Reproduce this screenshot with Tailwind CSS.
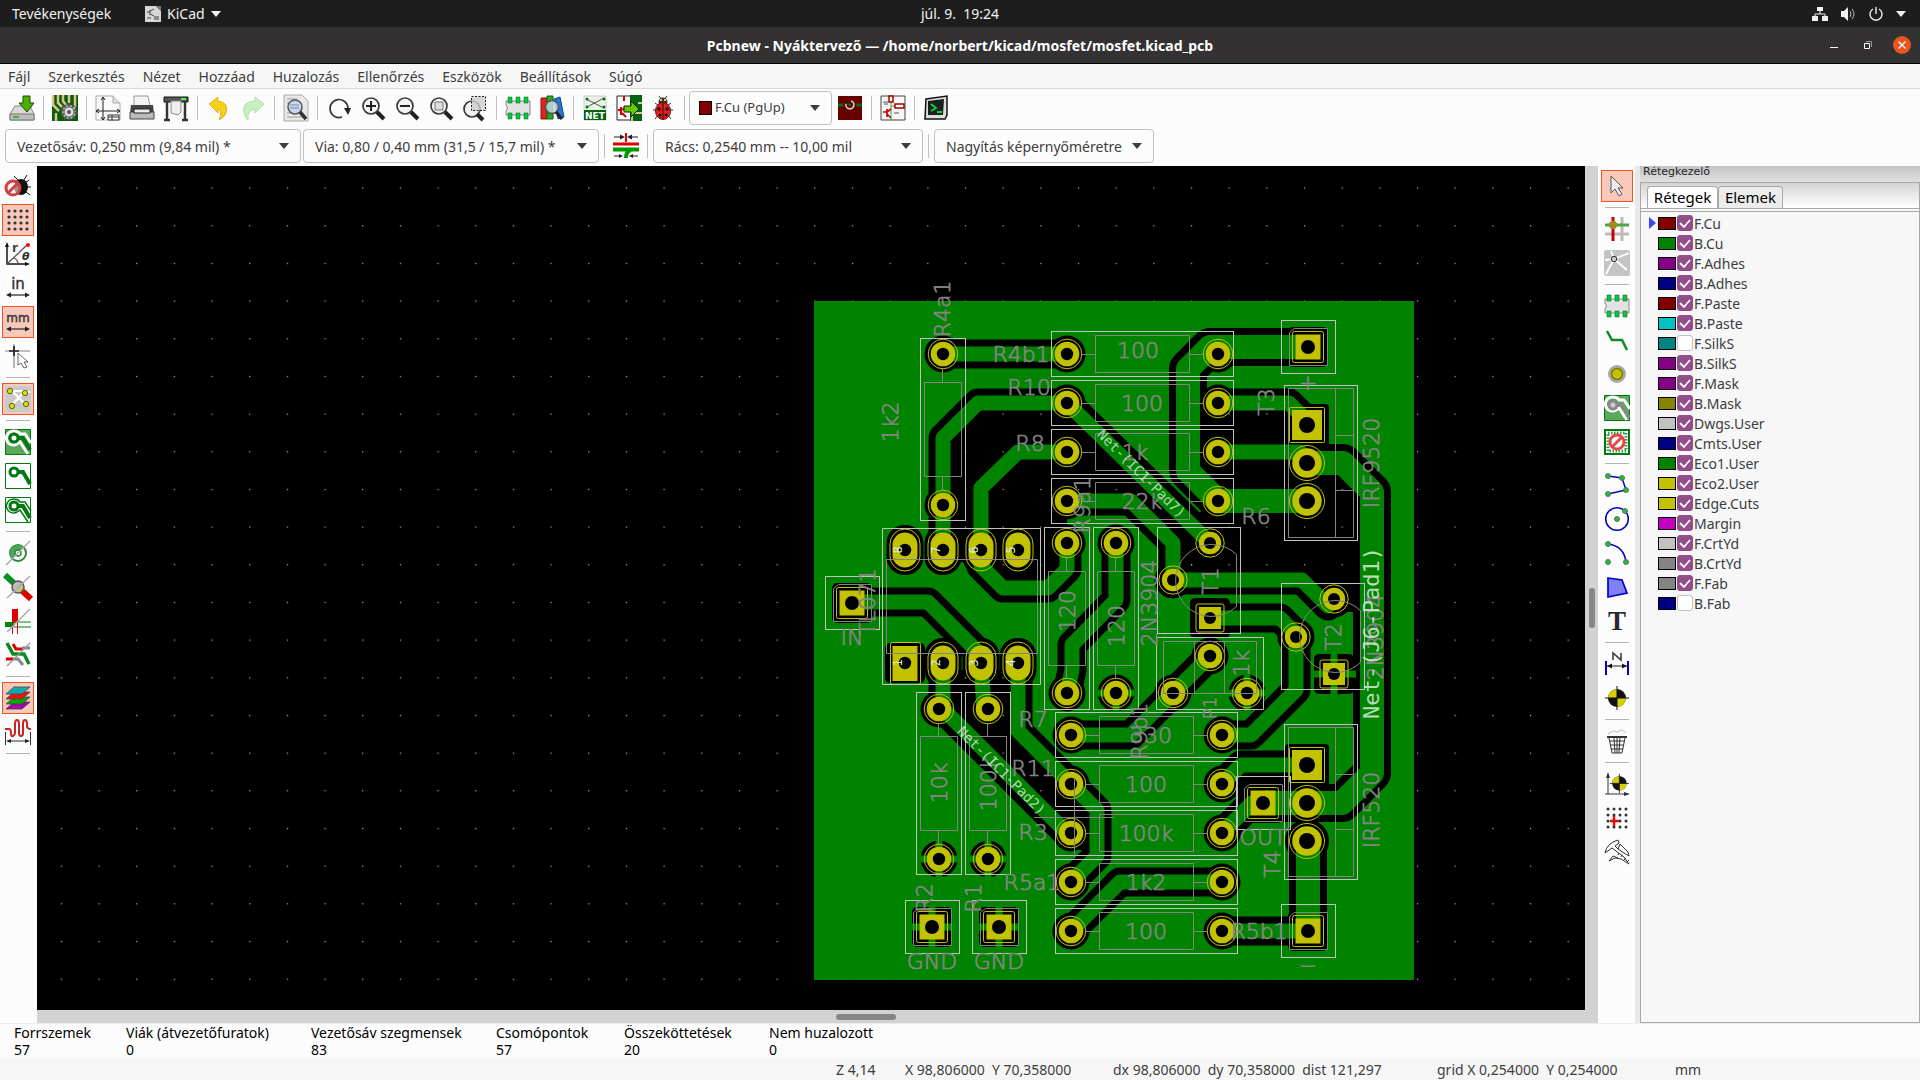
<!DOCTYPE html>
<html lang="hu">
<head>
  <meta charset="UTF-8" />
  <meta name="viewport" content="width=device-width, initial-scale=1" />
  <title>Pcbnew - Nyáktervező</title>
  <script src="https://cdn.jsdelivr.net/npm/@tailwindcss/browser@4"></script>
</head>
<body class="h-screen flex flex-col overflow-hidden bg-[#fcfcfc] text-[#3d3d3d] text-[14px] font-['Noto_Sans',sans-serif]">

  <!-- Top bar -->
  <header class="h-[27px] shrink-0 grid grid-cols-3 items-center bg-[#1d1d1d] text-[#f2f2f2] px-3">
    <div class="flex items-center">
      <button class="w-[133px] text-left">Tevékenységek</button>
      <button class="flex items-center gap-[6px]">
        <svg class="size-4" viewBox="0 0 16 16"><path d="M0 0h11l5 5v11H0z" fill="#d6d6d6"/><path d="M11 0h5v5z" fill="#777"/><path d="M2 6h3M5 4v5M5 5l4-2M5 8l4 2M2 12h4M9 11h5M9 13h5" stroke="#444" fill="none"/></svg>
        KiCad
        <svg class="w-[10px] h-[6px]" viewBox="0 0 10 6"><path d="M0 0h10L5 6z" fill="#f2f2f2"/></svg>
      </button>
    </div>
    <div class="text-center">júl. 9.&nbsp; 19:24</div>
    <div class="flex items-center justify-end gap-3 pr-[2px]">
      <svg class="size-4" viewBox="0 0 16 16" fill="#f2f2f2"><path d="M5 1h6v4H5zM0 10h6v5H0zM10 10h6v5h-6z"/><path d="M8 5v3M3 10V8h10v2" stroke="#f2f2f2" fill="none"/></svg>
      <svg class="size-4" viewBox="0 0 16 16"><path d="M1 5h3l4-4v14l-4-4H1z" fill="#f2f2f2"/><path d="M10 5q2 3 0 6M12 3q4 5 0 10" stroke="#bbb" fill="none"/></svg>
      <svg class="size-4" viewBox="0 0 16 16"><path d="M5 3a6 6 0 1 0 6 0M8 1v7" stroke="#f2f2f2" stroke-width="1.4" fill="none"/></svg>
      <svg class="w-[10px] h-[6px]" viewBox="0 0 10 6"><path d="M0 0h10L5 6z" fill="#f2f2f2"/></svg>
    </div>
  </header>

  <!-- Window title -->
  <div class="h-[37px] shrink-0 grid grid-cols-[1fr_auto_1fr] items-center bg-[#333132] border-b border-black text-white">
    <span></span>
    <h1 class="font-bold text-[14px]">Pcbnew - Nyáktervező — /home/norbert/kicad/mosfet/mosfet.kicad_pcb</h1>
    <div class="flex items-center justify-end gap-[26px] pr-[9px]">
      <button aria-label="Minimize"><svg class="w-2 h-2" viewBox="0 0 8 8"><path d="M0 6.500h8" stroke="#fff"/></svg></button>
      <button aria-label="Restore" class="-mr-[5px]"><svg class="w-2 h-2" viewBox="0 0 8 8" fill="none"><path d="M.5 2.500h5v5h-5z" stroke="#fff"/><path d="M2 .5h5.500V6" stroke="#999"/></svg></button>
      <button aria-label="Close" class="size-[18px] rounded-full bg-[#e95420] flex items-center justify-center"><svg class="size-2" viewBox="0 0 8 8"><path d="M.5.5l7 7M7.500.5l-7 7" stroke="#fff" stroke-width="1.300"/></svg></button>
    </div>
  </div>

  <!-- Menu -->
  <nav class="h-[25px] shrink-0 flex items-center gap-[18px] px-2 bg-[#f6f6f6] border-b border-[#d9d9d9] text-[14px]">
    <button>Fájl</button><button>Szerkesztés</button><button>Nézet</button><button>Hozzáad</button><button>Huzalozás</button><button>Ellenőrzés</button><button>Eszközök</button><button>Beállítások</button><button>Súgó</button>
  </nav>

  <!-- Main toolbar -->
  <div class="h-[38px] shrink-0 flex items-center pl-[5px] pb-px">
    <div class="flex items-center" data-icons="save | board | page print plot | undo redo | find | refresh zin zout zfit zsel | fp lib | net update bug |"></div>
    <div class="relative w-[143px] mr-px">
      <span class="absolute left-[10px] top-[10px] w-[13px] h-[14px] bg-[#840000] border border-black"></span>
      <select aria-label="Réteg" class="appearance-none w-full h-[34px] rounded border border-[#c0c0c0] pl-[25px] bg-transparent text-[13px]"><option>F.Cu (PgUp)</option></select>
      <svg class="absolute right-3 top-[14px] w-[10px] h-[6px] pointer-events-none" viewBox="0 0 10 6"><path d="M0 0h10L5 6z" fill="#3d3d3d"/></svg>
    </div>
    <div class="flex items-center" data-icons="pair | sch | term"></div>
  </div>

  <!-- Selectors -->
  <div class="h-[39px] shrink-0 flex items-center pl-[5px] pb-px">
    <div class="relative w-[296px] mr-[2px]">
      <select aria-label="Vezetősáv" class="appearance-none w-full h-[34px] rounded border border-[#c0c0c0] pl-[11px] text-[14px]"><option>Vezetősáv: 0,250 mm (9,84 mil) *</option></select>
      <svg class="absolute right-3 top-[14px] w-[10px] h-[6px] pointer-events-none" viewBox="0 0 10 6"><path d="M0 0h10L5 6z" fill="#3d3d3d"/></svg>
    </div>
    <div class="relative w-[296px]">
      <select aria-label="Via" class="appearance-none w-full h-[34px] rounded border border-[#c0c0c0] pl-[11px] text-[14px]"><option>Via: 0,80 / 0,40 mm (31,5 / 15,7 mil) *</option></select>
      <svg class="absolute right-3 top-[14px] w-[10px] h-[6px] pointer-events-none" viewBox="0 0 10 6"><path d="M0 0h10L5 6z" fill="#3d3d3d"/></svg>
    </div>
    <div class="flex items-center px-px" data-icons="| width |"></div>
    <div class="relative w-[270px]">
      <select aria-label="Rács" class="appearance-none w-full h-[34px] rounded border border-[#c0c0c0] pl-[11px] text-[14px]"><option>Rács: 0,2540 mm -- 10,00 mil</option></select>
      <svg class="absolute right-3 top-[14px] w-[10px] h-[6px] pointer-events-none" viewBox="0 0 10 6"><path d="M0 0h10L5 6z" fill="#3d3d3d"/></svg>
    </div>
    <div class="flex items-center px-px" data-icons="|"></div>
    <div class="relative w-[220px]">
      <select aria-label="Nagyítás" class="appearance-none w-full h-[34px] rounded border border-[#c0c0c0] pl-[11px] text-[14px]"><option>Nagyítás képernyőméretre</option></select>
      <svg class="absolute right-3 top-[14px] w-[10px] h-[6px] pointer-events-none" viewBox="0 0 10 6"><path d="M0 0h10L5 6z" fill="#3d3d3d"/></svg>
    </div>
  </div>

  <main class="flex-1 min-h-0 flex">
    <!-- Left toolbar -->
    <div class="w-[37px] shrink-0 flex flex-col items-center pt-[3px] pr-px" data-col="drc grid* polar inch mm* cursor | rats* | zfill znone zoutl | padsk viask trksk hc | layers* wave |"></div>

    <div class="flex-1 min-w-0 flex flex-col bg-[#d2d2d2]">
      <div class="flex-1 min-h-0 flex">
        <svg id="board" class="flex-1 min-w-0 h-full bg-black" viewBox="37 166 1548 844">
          <defs>
            <pattern id="dots" x="60.800" y="187.500" width="37.670" height="37.670" patternUnits="userSpaceOnUse"><rect width="1.200" height="1.200" fill="#b4b4b4"/></pattern>
            <!-- clearances -->
            <circle id="k" r="18.500"/>
            <rect id="ks" x="-20" y="-20" width="40" height="40" rx="5"/>
            <rect id="ko" x="-18.500" y="-25" width="37" height="50" rx="18"/>
            <!-- pads -->
            <g id="p"><circle r="12.300" fill="#c2c200"/><circle r="6.200"/><circle r="14.800" fill="none" stroke="#c2c200"/></g>
            <g id="pt"><circle r="11.200" fill="#c2c200"/><circle r="6"/><circle r="14.200" fill="none" stroke="#c2c200"/></g>
            <g id="pb"><circle r="14.800" fill="#c2c200"/><circle r="8"/><circle r="17.500" fill="none" stroke="#c2c200"/></g>
            <g id="s"><rect x="-12.500" y="-12.500" width="25" height="25" fill="#c2c200"/><circle r="7"/><rect x="-15.500" y="-15.500" width="31" height="31" rx="2" fill="none" stroke="#c2c200"/></g>
            <g id="st"><rect x="-11" y="-11" width="22" height="22" fill="#c2c200"/><circle r="6"/><rect x="-14" y="-14" width="28" height="28" rx="2" fill="none" stroke="#c2c200"/></g>
            <g id="sb"><rect x="-15" y="-15" width="30" height="30" fill="#c2c200"/><circle r="8"/><rect x="-17.500" y="-17.500" width="35" height="35" rx="1" fill="none" stroke="#c2c200"/></g>
            <g id="o"><rect x="-12.500" y="-17.500" width="25" height="35" rx="12.500" fill="#c2c200"/><circle r="6.200"/><rect x="-15" y="-21" width="30" height="42" rx="15" fill="none" stroke="#c2c200"/></g>
            <!-- footprints -->
            <g id="res"><rect x="-15.500" y="-22.500" width="182" height="45" stroke="#c2c2c2"/><path d="M28.500-18.500h94v37h-94zM15 .5h13M123 .5h13" stroke="#848484"/></g>
            <g id="pin"><rect x="-26.500" y="-26.500" width="54" height="53" stroke="#c2c2c2"/><path d="M-18.500-14.500l5-4h33v37h-38z" stroke="#848484"/></g>
            <g id="to220"><rect x="1284.500" y="385.500" width="73" height="155" stroke="#c2c2c2"/><path d="M1288.500 388.500h65v149h-65zM1335.500 388v149M1336 435.500h18M1336 490.500h18" stroke="#848484"/></g>
            <g id="to92"><rect x="1157.500" y="527.500" width="83" height="106" stroke="#c2c2c2"/><path d="M1236.500 554.500v52A36 36 0 1 1 1236.500 554.500" stroke="#848484"/></g>
            <!-- unfilled areas -->
            <g id="voids">
              <path d="M978 410H1067L1210 543 1195 580H1173V543L1131 501H1067V543L1048 580H1003L985 565 943 560V438z"/>
              <path d="M1200 400H1290L1325 463 1360 497V612H1334L1300 580H1173L1210 543 1195 515 1218 501 1200 480z"/>
              <path d="M943 670H1018V731L1097 810V850H1067L939 709z"/>
              <path d="M1237 776H1290V803H1237z"/>
            </g>
          </defs>

          <rect x="37" y="166" width="1548" height="844" fill="url(#dots)"/>
          <rect x="814" y="301" width="600" height="679" fill="#008400"/>
          <use href="#voids" fill="#000"/>

          <!-- track and pad clearances -->
          <g fill="none" stroke="#000" stroke-width="29" stroke-linejoin="round" stroke-linecap="round">
            <path d="M943 354H1067M1067 403H978L943 438V550M1067 452H1018L981 488V566L1003 588H1048L1067 569V543M1067 403L1210 543M1218 403H1289L1307 421M1218 452H1300M1067 501H1131L1173 543V580H1302L1328 606M1210 618H1280L1296 634V690L1251 735H1222M1116 543V600L1072 645V670L1067 693M1210 656L1131 735H1071M852 602H928L981 655V663L984 709M943 663V709L1067 833M1018 663V731L1097 810V856L1071 882M1222 882H1120L1071 931M1222 931H1308M1222 833L1252 803M1222 784L1241 765H1307"/>
            <path stroke-width="38" d="M1308 347H1210L1188 369V471L1218 501H1307M1307 463H1343L1372 492V773L1342 803H1263M1308 841V931"/>
          </g>
          <g fill="#000">
            <use href="#k" x="943" y="354"/><use href="#k" x="943" y="505"/><use href="#k" x="1067" y="354"/><use href="#k" x="1218" y="354"/><use href="#k" x="1067" y="403"/><use href="#k" x="1218" y="403"/><use href="#k" x="1067" y="452"/><use href="#k" x="1218" y="452"/><use href="#k" x="1067" y="501"/><use href="#k" x="1218" y="501"/>
            <use href="#k" x="1067" y="543"/><use href="#k" x="1067" y="693"/><use href="#k" x="1116" y="543"/><use href="#k" x="1116" y="693"/><use href="#k" x="1210" y="656"/><use href="#k" x="1173" y="693"/><use href="#k" x="1247" y="693"/><use href="#k" x="1173" y="580"/><use href="#k" x="1334" y="599"/><use href="#k" x="1296" y="637"/>
            <use href="#k" x="939" y="709"/><use href="#k" x="939" y="859"/><use href="#k" x="988" y="859"/><use href="#k" x="1071" y="735"/><use href="#k" x="1222" y="735"/><use href="#k" x="1071" y="784"/><use href="#k" x="1222" y="784"/><use href="#k" x="1071" y="833"/><use href="#k" x="1222" y="833"/><use href="#k" x="1071" y="882"/><use href="#k" x="1222" y="882"/><use href="#k" x="1071" y="931"/><use href="#k" x="1222" y="931"/>
            <use href="#ko" x="905" y="550"/><use href="#ko" x="943" y="550"/><use href="#ko" x="981" y="550"/><use href="#ko" x="1018" y="550"/><use href="#ks" x="905" y="663"/><use href="#ko" x="943" y="663"/><use href="#ko" x="981" y="663"/><use href="#ko" x="1018" y="663"/>
            <use href="#ks" x="852" y="603"/><use href="#ks" x="1308" y="347"/><use href="#ks" x="1308" y="931"/><use href="#ks" x="932" y="927"/><use href="#ks" x="999" y="927"/><use href="#ks" x="1263" y="803"/><use href="#ks" x="1210" y="618"/><use href="#ks" x="1334" y="674"/>
            <rect x="1285" y="404" width="44" height="44" rx="4"/><rect x="1285" y="744" width="44" height="44" rx="4"/><circle cx="1307" cy="841" r="22"/><circle cx="1307" cy="803" r="22"/>
          </g>
          <use href="#voids" fill="url(#dots)"/>

          <!-- back copper -->
          <g fill="none" stroke="#008400" stroke-width="15" stroke-linejoin="round" stroke-linecap="round">
            <path d="M943 354H1067M1067 403H978L943 438V550M1067 452H1018L981 488V566L1003 588H1048L1067 569V543M1067 403L1210 543M1218 403H1289L1307 421M1218 452H1300M1067 501H1131L1173 543V580H1302L1328 606M1210 618H1280L1296 634V690L1251 735H1222M1116 543V600L1072 645V670L1067 693M1210 656L1131 735H1071M852 602H928L981 655V663L984 709M943 663V709L1067 833M1018 663V731L1097 810V856L1071 882M1222 882H1120L1071 931M1222 931H1308M1222 833L1252 803M1222 784L1241 765H1307"/>
            <path stroke-width="24" d="M1308 347H1210L1188 369V471L1218 501H1307M1307 463H1343L1372 492V773L1342 803H1263M1308 841V931"/>
            <path stroke-width="7" stroke-linecap="butt" d="M932 905V949M910 927H954M999 905V949M977 927H1021M939 838V880M919 859H960M988 838V880M967 859H1009M1116 693V714M1096 693H1137M1247 672V714M1226 693H1268M1334 652V696M1312 674H1356"/>
          </g>

          <use href="#p" x="943" y="354"/><use href="#p" x="943" y="505"/><use href="#p" x="1067" y="354"/><use href="#p" x="1218" y="354"/><use href="#p" x="1067" y="403"/><use href="#p" x="1218" y="403"/><use href="#p" x="1067" y="452"/><use href="#p" x="1218" y="452"/><use href="#p" x="1067" y="501"/><use href="#p" x="1218" y="501"/>
          <use href="#p" x="1067" y="543"/><use href="#p" x="1067" y="693"/><use href="#p" x="1116" y="543"/><use href="#p" x="1116" y="693"/><use href="#p" x="1210" y="656"/><use href="#p" x="1173" y="693"/><use href="#p" x="1247" y="693"/><use href="#pt" x="1210" y="543"/><use href="#pt" x="1173" y="580"/><use href="#pt" x="1334" y="599"/><use href="#pt" x="1296" y="637"/>
          <use href="#p" x="939" y="709"/><use href="#p" x="939" y="859"/><use href="#p" x="988" y="709"/><use href="#p" x="988" y="859"/><use href="#p" x="1071" y="735"/><use href="#p" x="1222" y="735"/><use href="#p" x="1071" y="784"/><use href="#p" x="1222" y="784"/><use href="#p" x="1071" y="833"/><use href="#p" x="1222" y="833"/><use href="#p" x="1071" y="882"/><use href="#p" x="1222" y="882"/><use href="#p" x="1071" y="931"/><use href="#p" x="1222" y="931"/>
          <use href="#o" x="905" y="550"/><use href="#o" x="943" y="550"/><use href="#o" x="981" y="550"/><use href="#o" x="1018" y="550"/><use href="#o" x="943" y="663"/><use href="#o" x="981" y="663"/><use href="#o" x="1018" y="663"/>
          <rect x="892.500" y="646" width="25" height="35" fill="#c2c200"/><circle cx="905" cy="663" r="6.200"/><rect x="890.500" y="642.500" width="30" height="42" rx="2" fill="none" stroke="#c2c200"/>
          <use href="#s" x="852" y="603"/><use href="#s" x="1308" y="347"/><use href="#s" x="1308" y="931"/><use href="#s" x="932" y="927"/><use href="#s" x="999" y="927"/><use href="#s" x="1263" y="803"/>
          <use href="#st" x="1210" y="618"/><use href="#st" x="1334" y="674"/>
          <use href="#sb" x="1307" y="425"/><use href="#pb" x="1307" y="463"/><use href="#pb" x="1307" y="501"/><use href="#sb" x="1307" y="765"/><use href="#pb" x="1307" y="803"/><use href="#pb" x="1307" y="841"/>

          <!-- courtyards and outlines -->
          <g fill="none">
            <use href="#res" x="1067" y="354"/><use href="#res" x="1067" y="403"/><use href="#res" x="1067" y="452"/><use href="#res" x="1067" y="501"/>
            <use href="#res" x="1071" y="735"/><use href="#res" x="1071" y="784"/><use href="#res" x="1071" y="833"/><use href="#res" x="1071" y="882"/><use href="#res" x="1071" y="931"/>
            <use href="#res" transform="translate(943 354) rotate(90)"/><use href="#res" transform="translate(1067 543) rotate(90)"/><use href="#res" transform="translate(1116 543) rotate(90)"/><use href="#res" transform="translate(939 708) rotate(90)"/><use href="#res" transform="translate(988 708) rotate(90)"/>
            <use href="#pin" x="852" y="603"/><use href="#pin" x="1308" y="347"/><use href="#pin" x="1308" y="931"/><use href="#pin" x="932" y="927"/><use href="#pin" x="999" y="927"/><use href="#pin" x="1263" y="803"/>
            <use href="#to220"/><use href="#to220" y="339"/><use href="#to92"/><use href="#to92" x="124" y="56"/>
            <path d="M882.500 528.500h158v156h-158zM1156.500 637.500h107v72h-107z" stroke="#c2c2c2"/>
            <path d="M886.500 559.500h151v94h-151zM1163.500 641.500h93v52h-93zM1194.500 641v52M1224.500 641v52M1034 817.500h80M1074.500 778v80" stroke="#848484"/>
          </g>

          <!-- values and references -->
          <g fill="#848484" stroke="#848484" stroke-width=".7" font-family="DejaVu Sans" font-weight="200" font-size="22" text-anchor="middle">
            <text x="1021" y="362">R4b1</text><text x="1029" y="395">R10</text><text x="1030" y="451">R8</text><text x="1138" y="358">100</text><text x="1142" y="411">100</text><text x="1135" y="460">1k</text><text x="1142" y="509">22k</text><text x="1256" y="524">R6</text><text x="1308" y="390">+</text>
            <text x="852" y="645">IN</text><text x="1033" y="727">R7</text><text x="1033" y="776">R11</text><text x="1033" y="840">R3</text><text x="1032" y="890">R5a1</text><text x="1151" y="743">330</text><text x="1146" y="792">100</text><text x="1146" y="841">100k</text><text x="1146" y="890">1k2</text><text x="1146" y="939">100</text><text x="1259" y="939">R5b1</text><text x="1263" y="845">OUT</text><text x="932" y="969">GND</text><text x="999" y="969">GND</text><text x="1308" y="973">−</text>
            <text transform="translate(950 309) rotate(-90)">R4a1</text><text transform="translate(898 422) rotate(-90)">1k2</text><text transform="translate(1090 505) rotate(-90)">R9a1</text><text transform="translate(1274 402) rotate(-90)">T3</text><text transform="translate(1379 463) rotate(-90)">IRF9520</text><text transform="translate(1218 581) rotate(-90)">T1</text><text transform="translate(1157 603) rotate(-90)">2N3904</text><text transform="translate(1075 611) rotate(-90)">120</text><text transform="translate(1124 626) rotate(-90)">120</text>
            <text transform="translate(1341 637) rotate(-90)">T2</text><text transform="translate(1249 663) rotate(-90)">1k</text><text font-size="18" transform="translate(1216 708) rotate(-90)">P1</text><text transform="translate(1147 731) rotate(-90)">R9b1</text><text transform="translate(1280 864) rotate(-90)">T4</text><text transform="translate(1379 810) rotate(-90)">IRF520</text><text transform="translate(1383 637) rotate(-90)">2N3904</text><text transform="translate(875 602) rotate(-90)">TL071</text>
            <text transform="translate(932 898) rotate(-90)">R2</text><text transform="translate(981 898) rotate(-90)">R1</text><text transform="translate(947 783) rotate(-90)">10k</text><text transform="translate(996 784) rotate(-90)">100k</text>
          </g>

          <!-- net names -->
          <g fill="#dcecdc" font-family="DejaVu Sans Mono" text-anchor="middle">
            <g fill-opacity=".8" font-size="14"><text transform="translate(1138 477) rotate(45)">Net-(IC1-Pad7)</text><text transform="translate(998 774) rotate(45)">Net-(IC1-Pad2)</text></g>
            <text fill-opacity=".85" font-size="22" transform="translate(1379 633) rotate(-90)">Net-(J6-Pad1)</text>
            <g font-size="12"><text transform="translate(902 550) rotate(-90)">8</text><text transform="translate(940 550) rotate(-90)">7</text><text transform="translate(978 550) rotate(-90)">6</text><text transform="translate(1015 550) rotate(-90)">5</text><text transform="translate(902 663) rotate(-90)">1</text><text transform="translate(940 663) rotate(-90)">2</text><text transform="translate(978 663) rotate(-90)">3</text><text transform="translate(1015 663) rotate(-90)">4</text></g>
          </g>
        </svg>
        <div class="w-[13px] shrink-0 flex justify-center pt-[422px]"><div class="w-[6px] h-10 rounded-full bg-[#868686]"></div></div>
      </div>
      <div class="h-[13px] shrink-0 flex items-center pl-[799px]"><div class="w-[60px] h-[6px] rounded-full bg-[#868686]"></div></div>
    </div>

    <!-- Right toolbar -->
    <div class="w-[37px] shrink-0 flex flex-col items-center pt-[3px]" data-col="arrow* | hl local | fp2 route via zone keep | poly circ arc area text | dim target | trash | origin gridorg caliper"></div>

    <!-- Layers manager -->
    <aside class="w-[285px] shrink-0 flex flex-col border-l-[5px] border-[#e8e8e8] bg-[#f7f7f7]">
      <h2 class="h-4 shrink-0 pl-[3px] bg-linear-to-b from-[#c4c4c4] to-[#e0e0e0] text-[11px] leading-3 text-[#222] font-['DejaVu_Sans',sans-serif]">Rétegkezelő</h2>
      <div class="flex-1 min-h-0 border border-[#a8a8a8]">
        <div class="h-[26px] flex items-end pl-[6px] bg-linear-to-b from-[#d4d4d4] to-white border-b border-[#a8a8a8] text-[15px] text-black">
          <button class="w-[71px] h-[22px] leading-[18px] pb-[2px] rounded-t bg-white border border-b-0 border-[#a8a8a8]">Rétegek</button>
          <button class="w-[65px] h-[22px] leading-[18px] pb-[2px] rounded-t bg-[#ececec] border border-b-0 border-[#a8a8a8]">Elemek</button>
        </div>
        <div class="h-[3px] border-b border-[#a8a8a8]"></div>
        <ul id="layers" class="pl-2 pt-px"></ul>
      </div>
    </aside>
  </main>

  <!-- Board statistics -->
  <dl class="h-[35px] shrink-0 flex pl-[14px] text-[14px] leading-[17px] text-black border-t border-[#ececec]">
    <div class="w-[112px]"><dt>Forrszemek</dt><dd>57</dd></div>
    <div class="w-[185px]"><dt>Viák (átvezetőfuratok)</dt><dd>0</dd></div>
    <div class="w-[185px]"><dt>Vezetősáv szegmensek</dt><dd>83</dd></div>
    <div class="w-[128px]"><dt>Csomópontok</dt><dd>57</dd></div>
    <div class="w-[145px]"><dt>Összeköttetések</dt><dd>20</dd></div>
    <div><dt>Nem huzalozott</dt><dd>0</dd></div>
  </dl>
  <footer class="h-[22px] shrink-0 flex items-center pl-[836px] bg-[#f6f6f6] text-[14px]">
    <span class="w-[69px]">Z 4,14</span>
    <span class="w-[208px]">X 98,806000&nbsp; Y 70,358000</span>
    <span class="w-[324px]">dx 98,806000&nbsp; dy 70,358000&nbsp; dist 121,297</span>
    <span class="w-[238px]">grid X 0,254000&nbsp; Y 0,254000</span>
    <span>mm</span>
  </footer>

  <script>
    const lens = '<circle cx="11" cy="11" r="8" fill="#f4f4f4" stroke="#3a3a3a" stroke-width="1.700"/><path d="M17 17l7 7" stroke="#222" stroke-width="4"/>';
    const chip = '<path d="M1 6h24v14H1v-4q3-3 0-6z" fill="#e2e2e2" stroke="#888"/><g fill="#0c3" stroke="#264" stroke-width=".6"><path d="M3 2h4v6H3zM11 2h4v6h-4zM19 2h4v6h-4zM3 18h4v6H3zM11 18h4v6h-4zM19 18h4v6h-4z"/></g>';
    const cursor = '<path d="M7 3v17l4-4 4 7 3-2-4-6h5z" fill="#eee" stroke="#555"/>';
    const padTrack = '<circle cx="9" cy="9" r="4" fill="#fff" stroke="#007a10" stroke-width="3"/><path d="M13 9h5l7 12" fill="none" stroke="#007a10" stroke-width="4"/>';
    const halo = '<path d="M9 2a7 7 0 1 0 3 13l3-2 8 12M9 2q4 0 6 3h5l6 9" fill="none" stroke="';
    const target = '<circle cx="13" cy="13" r="9" fill="#111"/><path d="M13 13V4a9 9 0 0 0-9 9zM13 13v9a9 9 0 0 0 9-9z" fill="#d6d000"/><path d="M13 1v24M1 13h24" stroke="#111"/>';

    // 26x26 icons
    const icons = {
      save: '<path d="M6 11h15l4 8v6H1v-6z" fill="#d8d8d8" stroke="#8a8a8a"/><path d="M1 19h24v6H1z" fill="#bdbdbd" stroke="#777"/><path d="M4 22h6" stroke="#4a4" stroke-width="2"/><path d="M14 1h7v7h4l-7 9-8-9h4z" fill="#4fae00" stroke="#164d00"/>',
      board: '<path d="M0 0h26v26H0z" fill="#0a5c0a"/><path d="M1 0v10l6 6M6 0v8l4 4M11 0v6l3 4M17 0v8M23 0v12M4 26V18M22 12v3" stroke="#d8c48c" stroke-width="2.500" fill="none"/><circle cx="17" cy="17" r="7" fill="#ccc" stroke="#555" stroke-width="3" stroke-dasharray="2.500 2"/><circle cx="17" cy="17" r="5" fill="#ddd" stroke="#555"/><circle cx="17" cy="17" r="2" fill="#555"/>',
      page: '<path d="M1 1h17l7 7v17H1z" fill="#fafafa" stroke="#aaa"/><path d="M18 1v7h7" fill="#ddd" stroke="#aaa"/><path d="M8 2v23M1 16h24M6 5l2-3 2 3M6 22l2 3 2-3M4 14l-3 2 3 2M22 14l3 2-3 2" stroke="#222" fill="none"/><path d="M13 20h11v5H13zM13 22h11M17 20v5" stroke="#333" fill="#fff"/>',
      print: '<path d="M5 1h14l2 10H5z" fill="#f4f4f4" stroke="#999"/><path d="M2 10h22l1 8H1z" fill="#444"/><path d="M1 17h24v7H1z" fill="#bbb" stroke="#444"/><path d="M5 14h16v4H5z" fill="#eee" stroke="#222"/>',
      plot: '<path d="M1 2h24v5H1z" fill="#555" stroke="#111"/><path d="M18 4h5" stroke="#4f4" stroke-width="2"/><path d="M4 7v17M22 7v17M1 25h6M19 25h6" stroke="#333" stroke-width="2.500"/><path d="M8 6h10v11l-3 3-7-2z" fill="#eee" stroke="#888"/>',
      undo: '<path d="M3 9l9-7v4q11 1 8 12-2 5-7 7 4-10-1-11v4z" fill="#f5d21a" stroke="#d19b00" stroke-width=".7"/>',
      redo: '<path d="M24 9l-9-7v4Q1 7 4 18q1 4 4 7-1-10 7-11v4z" fill="#c6f0bd" stroke="#a2d898" stroke-width=".7"/>',
      find: '<path d="M1 0h18l6 6v20H1z" fill="#e8e8e8" stroke="#aaa"/><path d="M4 4h10M4 8h4M4 18h6M4 22h16" stroke="#999"/><circle cx="12" cy="12" r="7" fill="#c8d8f4" stroke="#555" stroke-width="1.500"/><path d="M7 10h9M7 13h9" stroke="#789"/><path d="M17 17l6 7" stroke="#333" stroke-width="3.500"/>',
      refresh: '<path d="M16 22a9 9 0 1 1 6-9" fill="none" stroke="#3a3a3a" stroke-width="1.700"/><path d="M18 13h7l-3 7z" fill="#222"/>',
      zin: lens + '<path d="M6 11h10M11 6v10" stroke="#222" stroke-width="2"/>',
      zout: lens + '<path d="M6 11h10" stroke="#222" stroke-width="2"/>',
      zfit: lens + '<path d="M7 7h8v8H7z" fill="#ddd" stroke="#777"/>',
      zsel: '<circle cx="10" cy="14" r="8" fill="#f4f4f4" stroke="#3a3a3a" stroke-width="1.700"/><path d="M15 19l6 6" stroke="#222" stroke-width="4"/><path d="M9.500 1.500h14v14h-14z" fill="#ccc" fill-opacity=".8" stroke="#222" stroke-dasharray="2 1.500"/>',
      fp: chip,
      lib: '<path d="M2 3h6v21H2z" fill="#d22" stroke="#911"/><path d="M8 1h6v23H8z" fill="#2a2" stroke="#161"/><path d="M15 4l6-2 4 20-6 2z" fill="#27d" stroke="#148"/><circle cx="13" cy="12" r="6.500" fill="#cde" fill-opacity=".8" stroke="#555" stroke-width="1.500"/><path d="M17 17l6 7" stroke="#222" stroke-width="3"/>',
      net: '<path d="M2 1h22v24H2z" fill="#eee" stroke="#ccc"/><path d="M4 4l18 9M22 3L5 12" stroke="#363"/><g fill="#070"><circle cx="5" cy="4" r="1.500"/><circle cx="22" cy="4" r="1.500"/><circle cx="5" cy="12" r="1.500"/><circle cx="22" cy="12" r="1.500"/></g><path d="M2 15h22v10H2z" fill="#006410"/><text x="13" y="23.500" font-size="9" font-family="DejaVu Sans" font-weight="bold" fill="#fff" text-anchor="middle">NET</text>',
      update: '<path d="M1 1h24v24H1z" fill="#fff" stroke="#222"/><path d="M14 0h12v26H14z" fill="#006410"/><path d="M8 1v5M2 15h4M5 12v8M6 15l4-3M6 18l4 4" stroke="#c00" stroke-width="2" fill="none"/><path d="M16 26V18h10M22 8h4" stroke="#d8c48c" stroke-width="2" fill="none"/><path d="M8 11h7V6l8 8-8 8v-5H8z" fill="#6c0" stroke="#122"/>',
      bug: '<path d="M5 8l4 3M21 8l-4 3M3 15h5M23 15h-5M5 24l4-5M21 24l-4-5M9 1l3 4M17 1l-3 4" stroke="#333"/><circle cx="13" cy="7" r="4.500" fill="#333"/><path d="M10 5h2M14 5h2" stroke="#e8d060" stroke-width="2"/><ellipse cx="13" cy="16" rx="7.500" ry="8.500" fill="#d22" stroke="#611"/><path d="M13 8v16" stroke="#400"/><g fill="#200"><circle cx="9" cy="14" r="1.700"/><circle cx="17" cy="14" r="1.700"/><circle cx="10" cy="20" r="1.500"/><circle cx="16" cy="20" r="1.500"/></g>',
      pair: '<path d="M1 1h24v24H1z" fill="#660000"/><path d="M1 10h24" stroke="#0a6a1a" stroke-width="3"/><path d="M9 9a4 4 0 1 0 5-3" fill="none" stroke="#660000" stroke-width="5"/><path d="M9 9a4 4 0 1 0 5-3" fill="none" stroke="#ccc" stroke-width="1.700"/>',
      sch: '<path d="M1 1h24v24H1z" fill="#f6f6f6" stroke="#444"/><path d="M11 1v24M11 11h4" stroke="#4a4"/><path d="M9 1h4v6H9zM15 9h9v4h-9z" fill="#fff" stroke="#a00" stroke-width="1.500"/><path d="M3 17h4M7 14v8M7 17l4-3M7 19l4 4" stroke="#c00" stroke-width="1.700" fill="none"/><path d="M3 7h5M4 9h4M14 18h5" stroke="#555"/>',
      term: '<path d="M3 4l21-3v19l-2 4H2z" fill="#ddd" stroke="#111" stroke-width="1.500"/><path d="M5 6l16-2-1 16H5z" fill="#1a1f22"/><path d="M8 9l5 4-5 3M14 17h5" stroke="#0d3" stroke-width="1.800" fill="none"/>',
      width: '<path d="M13 0v9" stroke="#d00" stroke-width="2"/><path d="M0 11h26" stroke="#d00" stroke-width="3"/><path d="M0 16.500h26" stroke="#090" stroke-width="4"/><path d="M18 17q-5 1-5 8" stroke="#090" stroke-width="4" fill="none"/><path d="M1 4h7M25 4h-7M1 23h6M25 23h-6" stroke="#222"/><path d="M7 1.500l5 2.500-5 2.500zM19 1.500L14 4l5 2.500zM6 21l4 2-4 2zM20 21l-4 2 4 2z" fill="#222"/>',
      drc: '<ellipse cx="16" cy="14" rx="7" ry="8" fill="#111"/><path d="M9 3l4 4M22 2l-3 5M24 7l-4 3M26 14h-5M25 22l-4-3" stroke="#111"/><circle cx="8" cy="15" r="7" fill="#eee" fill-opacity=".6" stroke="#d04045" stroke-width="3"/><path d="M3 20L13 10" stroke="#d04045" stroke-width="3"/>',
      grid: '<path d="M4 4h19M4 10h19M4 16h19M4 22h19" stroke="#333" stroke-width="3.200" stroke-linecap="round" stroke-dasharray="0 6"/>',
      polar: '<path d="M2 3v20h21" fill="none" stroke="#111" stroke-width="1.500"/><path d="M0 6l2-5 2 5zM20 21l5 2-5 2z" fill="#111"/><path d="M2 23L22 4M9 17q4 2 4 6" stroke="#555" fill="none" stroke-width="1.300"/><circle cx="23" cy="4" r="2" fill="#f00"/><text x="7" y="11" font-size="12" font-weight="bold" font-family="DejaVu Sans" fill="#444">r</text><text x="17" y="19" font-size="11" font-weight="bold" font-style="italic" font-family="DejaVu Sans" fill="#333">θ</text>',
      inch: '<text x="13" y="14" font-size="15" font-family="DejaVu Sans" fill="#333" stroke="#333" stroke-width=".4" text-anchor="middle">in</text><path d="M3 20h20" stroke="#333" stroke-width="1.300"/><path d="M1 20l5-2.500v5zM25 20l-5-2.500v5z" fill="#222"/>',
      mm: '<text x="13" y="13" font-size="12" font-family="DejaVu Sans" fill="#333" stroke="#333" stroke-width=".4" text-anchor="middle">mm</text><path d="M3 20h20" stroke="#333" stroke-width="1.300"/><path d="M1 20l5-2.500v5zM25 20l-5-2.500v5z" fill="#222"/>',
      cursor: '<path d="M9 1v24M0 8h25" stroke="#aaa" stroke-width="1.700"/><path d="M9 3v10M4 8h10" stroke="#222" stroke-width="1.700"/><path d="M13 10v12l3-2 3 5 3-1-3-5h4z" fill="#fff" stroke="#666"/>',
      rats: '<rect width="26" height="26" rx="3" fill="#c9c9c9"/><path d="M5 5h15L6 20M6 4l15 15M20 6h5" stroke="#fff" stroke-width="2" fill="none"/><g fill="#d6e000" stroke="#662"><circle cx="5" cy="5" r="2.700"/><circle cx="20" cy="7" r="2.700"/><circle cx="7" cy="20" r="2.700"/><circle cx="21" cy="18" r="2.700"/></g>',
      zfill: '<path d="M.5.5h25v25H.5z" fill="#5aa95a" stroke="#007a10"/>' + halo + '#fff" stroke-width="3"/>' + padTrack,
      znone: '<path d="M.5.5h25v25H.5z" fill="#fff" stroke="#007a10"/>' + padTrack,
      zoutl: '<path d="M.5.5h25v25H.5z" fill="#fff" stroke="#007a10"/>' + halo + '#007a10" stroke-width="1.500"/>' + padTrack,
      padsk: '<circle cx="13" cy="13" r="8" fill="none" stroke="#2a8a3a" stroke-width="2"/><path d="M7 19A8.500 8.500 0 0 1 19 7z" fill="#4aa55a"/><circle cx="13" cy="13" r="3" fill="#fff" stroke="#2a8a3a" stroke-width="1.500"/><path d="M1 25L25 1" stroke="#aaa" stroke-width="1.500"/>',
      viask: '<path d="M0 1l12 11" stroke="#0a9020" stroke-width="6"/><path d="M14 14l12 11" stroke="#d00" stroke-width="6"/><circle cx="13" cy="13" r="6" fill="#bbb" stroke="#555" stroke-width="1.500"/><path d="M18 11a6 6 0 0 1-6 7z" fill="#cc2"/><path d="M2 24L25 2" stroke="#aaa" stroke-width="1.500"/>',
      trksk: '<path d="M7 1h6v14H7z" fill="#d00"/><path d="M0 14h9v5H0z" fill="#008410"/><path d="M9 14h17M9 19h17" stroke="#008410"/><path d="M7.500 15v11M12.500 15v11" stroke="#d00"/><path d="M2 24L25 1" stroke="#aaa" stroke-width="1.500"/>',
      hc: '<path d="M2 1l6 11h11l5 10" stroke="#0a8a20" stroke-width="3.500" fill="none"/><path d="M8 2l3 5h7M1 17h7" stroke="#d00" stroke-width="3" fill="none"/><path d="M17 6h8M8 17h5l5 6" stroke="#888" stroke-width="3" fill="none"/><path d="M2 24L25 1" stroke="#999" stroke-width="1.300"/>',
      layers: '<g stroke="#444" stroke-width=".8"><path d="M1 24l8-7h16l-8 7z" fill="#a0a"/><path d="M1 19l8-7h16l-8 7z" fill="#0a0"/><path d="M1 14l8-7h16l-8 7z" fill="#e11"/><path d="M1 9l8-7h16l-8 7z" fill="#1aa"/></g>',
      wave: '<path d="M0 10h4q2 0 2 4t2 3 2-3V5q0-4 2-4t2 4v9q0 3 2 3t2-3V5q0-4 2-4t2 4v2q0 3 4 3" fill="none" stroke="#c22" stroke-width="2"/><path d="M.5 13v13M25.500 13v13M3 22h20" stroke="#333"/><path d="M1 22l5-2v4zM25 22l-5-2v4z" fill="#222"/>',
      arrow: cursor,
      hl: '<path d="M18 1v24M1 18h24" stroke="#bbb" stroke-width="3"/><path d="M9 1v24" stroke="#c00" stroke-width="3"/><path d="M1 9h24" stroke="#4aa54a" stroke-width="3"/><circle cx="9" cy="9" r="4.200" fill="#a08a20"/>',
      local: '<rect width="26" height="26" rx="2" fill="#c4c4c4"/><path d="M10 9L25 3M10 9l13 11M10 9L2 24M10 9L7 1M10 9l-9 1" stroke="#fff" stroke-width="1.800"/><circle cx="10" cy="9" r="2.700" fill="#ccc" stroke="#333"/>',
      fp2: chip,
      route: '<path d="M3 4l5 9h10l5 10" fill="none" stroke="#0a8a20" stroke-width="2.500"/>',
      via: '<circle cx="13" cy="13" r="7.500" fill="#c2c200" stroke="#a8a8a8" stroke-width="3"/><circle cx="13" cy="13" r="5.500" fill="#c2c200" stroke="#7c7c00" stroke-width="1.500"/>',
      zone: '<path d="M.5.5h25v25H.5z" fill="#5aa95a" stroke="#007a10"/>' + halo + '#fff" stroke-width="3"/><circle cx="9" cy="10" r="4" fill="#ccc" stroke="#888" stroke-width="3"/><path d="M13 10h5l7 13" fill="none" stroke="#888" stroke-width="3.500"/>',
      keep: '<path d="M1 1h24v24H1z" fill="#fff" stroke="#007a10" stroke-width="2"/><path d="M4 4h18v18H4z" fill="none" stroke="#3a9a4a" stroke-width="3" stroke-dasharray="1.500 1.500"/><circle cx="13" cy="13" r="7" fill="#fff" stroke="#e04848" stroke-width="3"/><path d="M8 8l10 10" stroke="#e04848" stroke-width="3" transform="rotate(90 13 13)"/>',
      poly: '<path d="M4 22l18-4-4-12L4 4" fill="none" stroke="#00c" stroke-width="1.500"/><g fill="#2b4" stroke="#575"><circle cx="4" cy="4" r="2.500"/><circle cx="18" cy="6" r="2.500"/><circle cx="22" cy="18" r="2.500"/><circle cx="4" cy="22" r="2.500"/></g>',
      circ: '<circle cx="13" cy="13" r="11.300" fill="none" stroke="#00c" stroke-width="1.500"/><g fill="#2b4" stroke="#575"><circle cx="13" cy="13" r="2.500"/><circle cx="21" cy="5" r="2.500"/></g>',
      arc: '<path d="M4 4q16 2 18 18" fill="none" stroke="#00c" stroke-width="1.500"/><g fill="#2b4" stroke="#575"><circle cx="4" cy="4" r="2.500"/><circle cx="4" cy="22" r="2.500"/><circle cx="22" cy="22" r="2.500"/></g>',
      area: '<path d="M4 4l14 2 5 13-19 4z" fill="#8080f4" stroke="#00c" stroke-width="1.700"/>',
      text: '<text x="13" y="22" font-size="27" font-weight="bold" font-family="Liberation Serif" fill="#2a2a2a" text-anchor="middle">T</text>',
      dim: '<path d="M2 10v14M24 10v14" stroke="#00c" stroke-width="2"/><path d="M3 15h20" stroke="#222"/><path d="M3 15l5-2.500v5zM23 15l-5-2.500v5z" fill="#111"/><path d="M9 9V2l8 7V2" fill="none" stroke="#333" stroke-width="1.500"/>',
      target: target,
      trash: '<path d="M4 6l5-3 4 1 5-2 4 3" fill="none" stroke="#bbb"/><path d="M3 9h20" stroke="#333" stroke-width="2"/><path d="M5 10l3 15h10l3-15M6 13h14M6 17h13M7 21h12M10 10l1 15M13 10v15M16 10l-1 15" fill="none" stroke="#333"/>',
      origin: '<path d="M4 3v20M1 23h23" stroke="#333" fill="none"/><path d="M2 7l2-6 2 6zM20 21l6 2-6 2z" fill="#333"/><g transform="translate(5 2) scale(.8)">' + target + '</g>',
      gridorg: '<path d="M4 4h19M4 10h19M4 16h19M4 22h19" stroke="#333" stroke-width="3" stroke-linecap="round" stroke-dasharray="0 6"/><path d="M10 11v10M6 16h9" stroke="#e01010" stroke-width="2.500"/>',
      caliper: '<path d="M1 14Q3 4 14 1l1 3-4 3 3 3 2-5 8 8 1 4-5-3-6-4M1 14l7-5 12 9 5 7-8-5-6-1-6 3 4-5 5 2M14 16l1-2M17 18l1-2M20 21l2-2M23 23l2-2" fill="none" stroke="#333"/>'
    };

    function build(names, vertical) {
      return names.trim().split(/\s+/).map(n => {
        if (n === '|') {
          return vertical
            ? '<span class="h-[9px] w-6 shrink-0 flex items-center"><i class="h-px w-full bg-[#b4b4b4]"></i></span>'
            : '<span class="w-[9px] h-6 flex justify-center"><i class="w-px h-full bg-[#c0c0c0]"></i></span>';
        }
        const on = n.endsWith('*');
        const key = n.replace('*', '');
        const box = on
          ? 'size-8 m-px shrink-0 flex items-center justify-center border border-[#e95420] bg-[#f8c9ba]'
          : 'size-[34px] shrink-0 flex items-center justify-center';
        return `<button aria-label="${key}" class="${box}"><svg class="size-[26px] overflow-visible" viewBox="0 0 26 26">${icons[key]}</svg></button>`;
      }).join('');
    }
    document.querySelectorAll('[data-icons]').forEach(el => el.innerHTML = build(el.dataset.icons, false));
    document.querySelectorAll('[data-col]').forEach(el => el.innerHTML = build(el.dataset.col, true));

    const layers = [
      ['F.Cu', '#840000', 1], ['B.Cu', '#008400', 1], ['F.Adhes', '#840084', 1], ['B.Adhes', '#000084', 1],
      ['F.Paste', '#840000', 1], ['B.Paste', '#00c2c2', 1], ['F.SilkS', '#008484', 0], ['B.SilkS', '#840084', 1],
      ['F.Mask', '#840084', 1], ['B.Mask', '#848400', 1], ['Dwgs.User', '#c2c2c2', 1], ['Cmts.User', '#000084', 1],
      ['Eco1.User', '#008400', 1], ['Eco2.User', '#c2c200', 1], ['Edge.Cuts', '#c2c200', 1], ['Margin', '#c200c2', 1],
      ['F.CrtYd', '#c2c2c2', 1], ['B.CrtYd', '#848484', 1], ['F.Fab', '#848484', 1], ['B.Fab', '#000084', 0]
    ];
    document.getElementById('layers').innerHTML = layers.map(([name, color, on], i) => `
      <li class="h-5 flex items-center">
        <svg class="w-[9px] h-3" viewBox="0 0 9 12">${i === 0 ? '<path d="M0 0l7 6-7 6z" fill="#4040ff"/>' : ''}</svg>
        <span class="w-[18px] h-[13px] border border-black" style="background:${color}"></span>
        <label class="flex items-center h-5 text-[14px]">
          <span class="relative size-4 ml-px">
            <input type="checkbox" ${on ? 'checked' : ''} class="peer appearance-none block size-4 rounded-[3px] border border-[#c0c0c0] bg-white checked:bg-[#924d8b] checked:border-[#924d8b]" />
            <svg class="absolute inset-0 hidden peer-checked:block" viewBox="0 0 16 16"><path d="M3 8l4 4 6-7" stroke="#fff" stroke-width="1.800" fill="none"/></svg>
          </span>
          <span class="pl-px">${name}</span>
        </label>
      </li>`).join('');
  </script>
</body>
</html>
